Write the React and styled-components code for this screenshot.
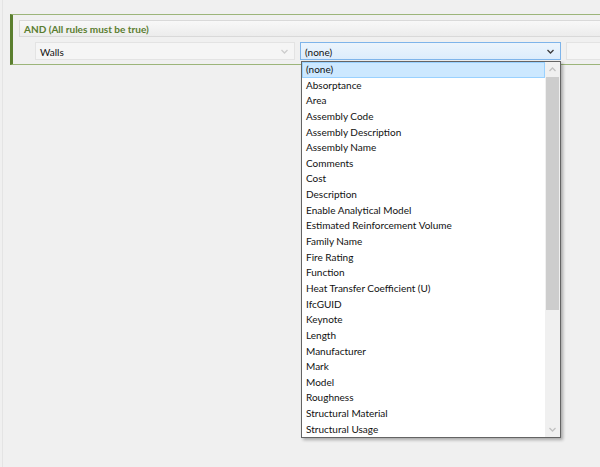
import React from "react";
import styled, { createGlobalStyle } from "styled-components";

const fields = [
	"(none)",
	"Absorptance",
	"Area",
	"Assembly Code",
	"Assembly Description",
	"Assembly Name",
	"Comments",
	"Cost",
	"Description",
	"Enable Analytical Model",
	"Estimated Reinforcement Volume",
	"Family Name",
	"Fire Rating",
	"Function",
	"Heat Transfer Coefficient (U)",
	"IfcGUID",
	"Keynote",
	"Length",
	"Manufacturer",
	"Mark",
	"Model",
	"Roughness",
	"Structural Material",
	"Structural Usage",
];

const Chevron = ({ up, color }) => (
	<svg width="7" height="5" viewBox="0 0 7 5">
		<path
			d={up ? "M0.5 4 L3.5 1 L6.5 4" : "M0.5 1 L3.5 4 L6.5 1"}
			fill="none"
			stroke={color}
			strokeWidth="1.3"
		/>
	</svg>
);

const App = () => {
	return (
		<>
			<GlobalStyle />
			<Page>
				<Panel>
					<Header>AND (All rules must be true)</Header>
					<Row>
						<Combo>
							<span>Walls</span>
							<Chevron color="#cdcdcd" />
						</Combo>
						<ComboWrap>
							<Combo open>
								<span>(none)</span>
								<Chevron color="#3c3c3c" />
							</Combo>
							<List>
								<Items>
									{fields.map((f, i) => (
										<Item key={f} selected={i === 0}>
											{f}
										</Item>
									))}
								</Items>
								<Scrollbar>
									<Arrow>
										<Chevron up color="#c2c2c2" />
									</Arrow>
									<Thumb />
									<Track />
									<Arrow>
										<Chevron color="#c2c2c2" />
									</Arrow>
								</Scrollbar>
							</List>
						</ComboWrap>
						<Blank />
					</Row>
				</Panel>
			</Page>
		</>
	);
};

const GlobalStyle = createGlobalStyle`
	html, body {
		margin: 0;
		background: #f0f0f0;
	}
	body {
		font-family: Lato, "Open Sans", sans-serif;
		font-size: 10px;
		color: #111;
	}
`;

const Page = styled.div`
	height: 467px;
	overflow: hidden;
	padding: 14px 0 0 10px;
	box-sizing: border-box;
	border-left: 1px solid #e4e4e4;
	margin-left: 2px;
`;

const Panel = styled.div`
	margin-left: -3px;
	height: 51px;
	box-sizing: border-box;
	border-left: 3px solid #5b7f2f;
	border-top: 1px solid #9cb57a;
	border-bottom: 1px solid #9cb57a;
	padding: 5px 0 0 6px;
`;

const Header = styled.div`
	height: 17px;
	box-sizing: border-box;
	border: 1px solid #d9d9d9;
	border-right: none;
	background: linear-gradient(#f8f8f8, #ececec);
	color: #5a7d2f;
	font-weight: 700;
	font-size: 10px;
	line-height: 16px;
	padding-left: 4px;
	white-space: nowrap;
`;

const Row = styled.div`
	display: flex;
	gap: 5px;
	margin: 5px 0 0 16px;
`;

const ComboWrap = styled.div`
	position: relative;
	flex-shrink: 0;
`;

const Combo = styled.div`
	flex-shrink: 0;
	width: ${(p) => (p.open ? 261 : 260)}px;
	height: 18px;
	box-sizing: border-box;
	display: flex;
	align-items: center;
	justify-content: space-between;
	padding: 1px 6px 0 4px;
	border: 1px solid ${(p) => (p.open ? "#7eb4ea" : "#e3e3e3")};
	background: ${(p) =>
		p.open ? "linear-gradient(#ecf4fc, #dcecfc)" : "#f5f5f5"};
	white-space: nowrap;
`;

const Blank = styled.div`
	flex: 0 0 60px;
	height: 18px;
	box-sizing: border-box;
	border: 1px solid #e3e3e3;
	background: #f5f5f5;
`;

const List = styled.div`
	position: absolute;
	top: 19px;
	left: 1px;
	width: 260px;
	height: 377px;
	box-sizing: border-box;
	border: 1px solid #646464;
	background: #fff;
	box-shadow: 2px 2px 3px rgba(0, 0, 0, 0.3);
	display: flex;
`;

const Items = styled.div`
	flex: 1;
	overflow: hidden;
`;

const Item = styled.div`
	height: 15.65px;
	line-height: 12px;
	box-sizing: border-box;
	padding-left: 3px;
	white-space: nowrap;
	border: 1px solid ${(p) => (p.selected ? "#99d1ff" : "transparent")};
	background: ${(p) => (p.selected ? "#cce8ff" : "transparent")};
`;

const Scrollbar = styled.div`
	width: 15px;
	background: #f0f0f0;
	display: flex;
	flex-direction: column;
`;

const Arrow = styled.div`
	height: 15px;
	display: flex;
	align-items: center;
	justify-content: center;
`;

const Thumb = styled.div`
	height: 233px;
	margin: 0 1px;
	background: #cdcdcd;
`;

const Track = styled.div`
	flex: 1;
`;

export default App;
